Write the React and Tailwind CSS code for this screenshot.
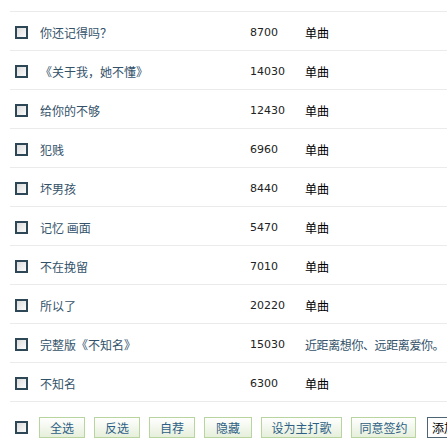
import React from "react";

const songs = [
  { title: "你还记得吗？", plays: 8700, type: "单曲" },
  { title: "《关于我，她不懂》", plays: 14030, type: "单曲" },
  { title: "给你的不够", plays: 12430, type: "单曲" },
  { title: "犯贱", plays: 6960, type: "单曲" },
  { title: "坏男孩", plays: 8440, type: "单曲" },
  { title: "记忆 画面", plays: 5470, type: "单曲" },
  { title: "不在挽留", plays: 7010, type: "单曲" },
  { title: "所以了", plays: 20220, type: "单曲" },
  { title: "完整版《不知名》", plays: 15030, type: "近距离想你、远距离爱你。", album: true },
  { title: "不知名", plays: 6300, type: "单曲" },
];

const buttons = [
  { label: "全选", w: "w-[46px]" },
  { label: "反选", w: "w-[46px]" },
  { label: "自荐", w: "w-[46px]" },
  { label: "隐藏", w: "w-[48px]" },
  { label: "设为主打歌", w: "w-[81px]" },
  { label: "同意签约", w: "w-[65px]" },
];

function Box() {
  return (
    <span className="block shrink-0 w-[13px] h-[13px] border-2 border-[#2e4756] bg-gradient-to-br from-[#dcdcdc] to-[#fbfbfb]" />
  );
}

export default function App() {
  return (
    <div
      className="w-[447px] h-[447px] overflow-hidden bg-white text-[12px]"
      style={{ fontFamily: '"Noto Sans CJK SC", "DejaVu Sans", sans-serif' }}
    >
      {/* partial row cut off at the top */}
      <div className="-mt-[27px] ml-[10px] h-[39px] border-b border-[#ebebeb] flex items-end pb-[11px] pl-[5px]">
        <Box />
        <span className="ml-[268px] mb-[3px] w-px h-[10px] bg-[#555]" />
      </div>

      {/* SONG ROWS */}
      {songs.map((s, i) => (
        <div
          key={i}
          className="ml-[10px] h-[39px] border-b border-[#ebebeb] flex items-center pl-[5px] pt-[3px]"
        >
          <Box />
          <span className="w-[222px] pl-[12px] text-[#33526a] whitespace-nowrap leading-none">
            {s.title}
          </span>
          <span
            className="w-[55px] text-[11px] text-[#222] leading-none"
            style={{ fontFamily: '"DejaVu Sans", sans-serif' }}
          >
            {s.plays}
          </span>
          <span
            className={`whitespace-nowrap leading-none ${
              s.album ? "text-[#33526a] tracking-[-0.4px]" : "text-black"
            }`}
          >
            {s.type}
          </span>
        </div>
      ))}

      {/* FOOTER BUTTONS */}
      <div className="flex items-center pl-[15px] pt-[15px] whitespace-nowrap">
        <Box />
        <div className="flex gap-[9px] ml-[11px]">
          {buttons.map((b) => (
            <button
              key={b.label}
              className={`${b.w} h-[21px] border border-[#b9d59f] bg-gradient-to-b from-white to-[#e6efdb] text-[#2d5f86] text-[12px] leading-none`}
            >
              {b.label}
            </button>
          ))}
          <span className="ml-[2px] h-[21px] w-[30px] shrink-0 flex items-center pl-[4px] border border-[#4d6473] bg-white text-black text-[12px] overflow-hidden">
            添加
          </span>
        </div>
      </div>
    </div>
  );
}
